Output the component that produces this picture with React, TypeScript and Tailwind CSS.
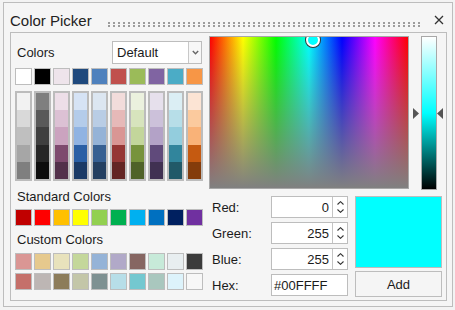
import React from "react";

const THEME = ["#FFFFFF", "#000000", "#EEE4EB", "#1F497D", "#4F81BD", "#C0504D", "#9BBB59", "#8064A2", "#4BACC6", "#F79646"];

const TINTS = [
  ["#F2F2F2", "#D9D9D9", "#BFBFBF", "#A6A6A6", "#7F7F7F"],
  ["#7F7F7F", "#595959", "#3F3F3F", "#262626", "#0D0D0D"],
  ["#EDDEE8", "#DCC1D4", "#CBA3BF", "#7E4A6E", "#52304A"],
  ["#D6E3F5", "#B4CCEA", "#90B3E2", "#2A5FA5", "#1B3A66"],
  ["#DCE6F1", "#B9CDE5", "#95B3D7", "#376092", "#254061"],
  ["#F2DCDB", "#E6B9B8", "#D99694", "#953735", "#632523"],
  ["#EBF1DE", "#D7E4BD", "#C3D69B", "#77933C", "#4F6228"],
  ["#E6E0EC", "#CCC1DA", "#B3A2C7", "#604A7B", "#403152"],
  ["#DBEEF4", "#B7DEE8", "#93CDDD", "#31859C", "#215968"],
  ["#FCE4D4", "#FBCA9E", "#F9B278", "#C55A11", "#843C0B"],
];

const STANDARD = ["#C00000", "#FF0000", "#FFC000", "#FFFF00", "#92D050", "#00B050", "#00B0F0", "#0070C0", "#002060", "#7030A0"];

const CUSTOM = [
  ["#DA9694", "#E6C98D", "#E8E2BC", "#C4D79B", "#95B3D7", "#B1A9C8", "#866662", "#C7EAD9", "#E8EEF0", "#3B3B3B"],
  ["#C5706A", "#BDB6B4", "#8C7C5A", "#C3C6A8", "#7E9192", "#B7DEE8", "#74C8D0", "#A9C7BE", "#DDF3FB", "#F7F7F7"],
];

function Swatch({ color }: { color: string }) {
  return <div className="w-[17px] h-[17px] border border-[#bdbdbd]" style={{ backgroundColor: color }} />;
}

function SwatchRow({ colors }: { colors: string[] }) {
  return (
    <div className="flex gap-[2px]">
      {colors.map((c, i) => (
        <Swatch key={i} color={c} />
      ))}
    </div>
  );
}

function Spinner() {
  return (
    <div className="flex w-[15px] flex-col items-center justify-center gap-[4px] border-l border-[#c4c4c4]">
      <svg width="7" height="4" viewBox="0 0 7 4">
        <path d="M0.5 3.5L3.5 0.7L6.5 3.5" stroke="#333" strokeWidth="1.1" fill="none" />
      </svg>
      <svg width="7" height="4" viewBox="0 0 7 4">
        <path d="M0.5 0.5L3.5 3.3L6.5 0.5" stroke="#333" strokeWidth="1.1" fill="none" />
      </svg>
    </div>
  );
}

function NumberField({ label, value }: { label: string; value: string }) {
  return (
    <div className="flex h-[22px] items-center">
      <span className="w-[59px]">{label}</span>
      <div className="flex h-full w-[77px] border border-[#bdbdbd] bg-white">
        <span className="flex flex-1 items-center justify-end pr-[3px]">{value}</span>
        <Spinner />
      </div>
    </div>
  );
}

export default function App() {
  return (
    <div className="h-[310px] w-[455px] bg-[#f3f3f3] pl-[3px] pt-[2px] font-['Liberation_Sans',Arial,sans-serif] text-[13px] leading-[15px] text-[#1b1b1b]">
      <div className="flex h-[305px] w-[450px] flex-col border border-[#bdbdbd] bg-[#f5f5f5]">
        {/* title bar */}
        <div className="flex h-[29px] shrink-0 items-start pl-[6px] pt-[9px]">
          <span className="text-[15px] leading-[17px] text-[#222]">Color Picker</span>
          <svg className="ml-[16px] mt-[10px]" width="312" height="5">
            <defs>
              <pattern id="grip" width="5" height="3" patternUnits="userSpaceOnUse">
                <rect x="0" y="0" width="2" height="2" fill="#9c9c9c" />
              </pattern>
            </defs>
            <rect width="312" height="5" fill="url(#grip)" />
          </svg>
          <svg className="ml-[14px] mt-[3px]" width="10" height="10" viewBox="0 0 10 10">
            <path d="M1 1L9 9M9 1L1 9" stroke="#333" strokeWidth="1.3" />
          </svg>
        </div>

        {/* panel */}
        <div className="ml-[6px] flex h-[269px] w-[437px] border border-[#bdbdbd]">
          {/* left column */}
          <div className="ml-[4px] flex w-[189px] flex-col">
            <div className="mt-[8px] flex h-[23px] items-center justify-between">
              <span className="ml-[2px]">Colors</span>
              <div className="mr-[2px] flex h-full w-[90px] border border-[#bdbdbd] bg-white">
                <span className="flex flex-1 items-center pl-[4px]">Default</span>
                <div className="flex w-[13px] items-center justify-center border-l border-[#c8c8c8] bg-[#f7f7f7]">
                  <svg width="7" height="5" viewBox="0 0 7 5">
                    <path d="M0.8 1L3.5 3.8L6.2 1" stroke="#666" strokeWidth="1.4" fill="none" />
                  </svg>
                </div>
              </div>
            </div>

            <div className="mt-[4px]">
              <SwatchRow colors={THEME} />
            </div>

            <div className="mt-[6px] flex gap-[2px]">
              {TINTS.map((col, i) => (
                <div key={i} className="flex h-[90px] w-[17px] flex-col border-2 border-[#bcbcbc]">
                  {col.map((c, j) => (
                    <div key={j} className="flex-1" style={{ backgroundColor: c }} />
                  ))}
                </div>
              ))}
            </div>

            <span className="ml-[2px] mt-[8px]">Standard Colors</span>
            <div className="mt-[5px]">
              <SwatchRow colors={STANDARD} />
            </div>

            <span className="ml-[2px] mt-[6px]">Custom Colors</span>
            <div className="mt-[6px] flex flex-col gap-[3px]">
              {CUSTOM.map((row, i) => (
                <SwatchRow key={i} colors={row} />
              ))}
            </div>
          </div>

          {/* right column */}
          <div className="ml-[5px] flex flex-col">
            <div className="mt-[3px] flex">
              <div className="relative h-[153px] w-[200px] overflow-hidden border border-[#a8a8a8] bg-[linear-gradient(to_right,#f00,#ff0,#0f0,#0ff,#00f,#f0f,#f00)]">
                <div className="h-full w-full bg-[linear-gradient(to_bottom,rgba(128,128,128,0),#808080)]" />
                <div className="absolute left-[96px] top-[-4px] h-[14px] w-[14px] rounded-full border-2 border-white bg-[#00ffff] shadow-[0_0_0_1px_#333]" />
              </div>
              <div className="ml-[4px] flex items-center">
                <svg width="7" height="11" viewBox="0 0 7 11">
                  <path d="M0 0L6 5.5L0 11Z" fill="#555" />
                </svg>
              </div>
              <div className="ml-[1px] h-[154px] w-[16px] border border-[#a8a8a8] bg-[linear-gradient(to_bottom,#fff,#0ff,#000)]" />
              <div className="flex items-center">
                <svg width="6" height="11" viewBox="0 0 6 11">
                  <path d="M6 0L0 5.5L6 11Z" fill="#555" />
                </svg>
              </div>
            </div>

            <div className="mt-[6px] flex">
              <div className="ml-[3px] flex flex-col gap-[4px]">
                <NumberField label="Red:" value="0" />
                <NumberField label="Green:" value="255" />
                <NumberField label="Blue:" value="255" />
                <div className="flex h-[22px] items-center">
                  <span className="w-[59px]">Hex:</span>
                  <div className="flex h-full w-[77px] items-center border border-[#bdbdbd] bg-white pl-[2px]">#00FFFF</div>
                </div>
              </div>
              <div className="ml-[7px] flex flex-col">
                <div className="h-[72px] w-[87px] border border-[#bdbdbd] bg-[#00ffff]" />
                <button className="mt-[3px] h-[26px] w-[87px] border border-[#bdbdbd] bg-[#f5f5f5] text-[13px]">Add</button>
              </div>
            </div>
          </div>
        </div>
      </div>
    </div>
  );
}
